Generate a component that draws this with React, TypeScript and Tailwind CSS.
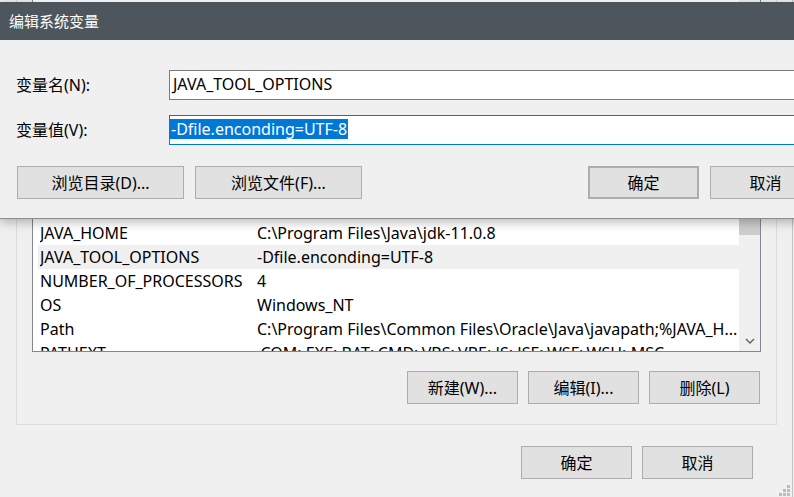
import React from "react";

const hiddenRows: [string, string][] = [
  ["CLASSPATH", ".;%JAVA_HOME%\\lib;%JAVA_HOME%\\lib\\tools.jar"],
  ["ComSpec", "C:\\Windows\\system32\\cmd.exe"],
  ["configsetroot", "C:\\Windows\\ConfigSetRoot"],
  ["DriverData", "C:\\Windows\\System32\\Drivers\\DriverData"],
  ["ERLANG_HOME", "C:\\Program Files\\erl-23.0"],
  ["GRADLE_HOME", "D:\\gradle-6.5"],
  ["GRADLE_USER_HOME", "D:\\gradle-repo"],
  ["INTEL_DEV_REDIST", "C:\\Program Files (x86)\\Common Files\\Intel\\Shared Libraries\\"],
  ["IntelliJ IDEA", "C:\\Program Files\\JetBrains\\IntelliJ IDEA 2020.2\\bin;"],
];

const rows: [string, string, boolean][] = [
  ["JAVA_HOME", "C:\\Program Files\\Java\\jdk-11.0.8", false],
  ["JAVA_TOOL_OPTIONS", "-Dfile.enconding=UTF-8", true],
  ["NUMBER_OF_PROCESSORS", "4", false],
  ["OS", "Windows_NT", false],
  ["Path", "C:\\Program Files\\Common Files\\Oracle\\Java\\javapath;%JAVA_H...", false],
  ["PATHEXT", ".COM;.EXE;.BAT;.CMD;.VBS;.VBE;.JS;.JSE;.WSF;.WSH;.MSC", false],
];

function Row({ name, value, sel }: { name: string; value: string; sel?: boolean }) {
  return (
    <div className={`flex h-[24px] items-center whitespace-nowrap pl-[2px] leading-[20px] ${sel ? "bg-[#f0f0f0]" : ""}`}>
      <div className="w-[217px] shrink-0 overflow-hidden">{name}</div>
      <div className="flex-1 overflow-hidden">{value}</div>
    </div>
  );
}

function Btn({ children, className = "" }: { children: React.ReactNode; className?: string }) {
  return (
    <div className={`flex h-[33px] shrink-0 items-center justify-center border border-[#adadad] bg-[#e1e1e1] leading-[20px] ${className}`}>
      {children}
    </div>
  );
}

export default function App() {
  return (
    <div className="relative h-[497px] w-[794px] overflow-hidden bg-[#f0f0f0] font-['Noto_Sans','Noto_Sans_CJK_SC',sans-serif] text-[16px] text-black">
      {/* underlying window: 系统变量 */}
      <div className="flex h-full w-[793px] flex-col border-r border-[#c4c4c4]">
        <div className="ml-[16px] flex w-[761px] flex-col border-x border-b border-[#dcdcdc] px-[15px] pb-[20px]">
          <div className="flex h-[352px] border-x border-b border-[#828790] bg-white">
            <div className="flex-1 overflow-hidden pl-[5px] pt-[5px]">
              {hiddenRows.map(([n, v]) => (
                <Row key={n} name={n} value={v} />
              ))}
              {rows.map(([n, v, s]) => (
                <Row key={n} name={n} value={v} sel={s} />
              ))}
            </div>
            <div className="flex w-[21px] flex-col bg-[#f0f0f0]">
              <div className="h-[21px]" />
              <div className="h-[214px] bg-[#cdcdcd]" />
              <div className="flex-1" />
              <div className="flex h-[21px] items-center justify-center">
                <svg width="10" height="6" viewBox="0 0 10 6">
                  <path d="M1 1 L5 5 L9 1" fill="none" stroke="#606060" strokeWidth="1.4" />
                </svg>
              </div>
            </div>
          </div>
          <div className="mt-[19px] flex justify-end gap-[10px] pr-[1px]">
            <Btn className="w-[111px]">新建(W)...</Btn>
            <Btn className="w-[111px]">编辑(I)...</Btn>
            <Btn className="w-[111px]">删除(L)</Btn>
          </div>
        </div>
        <div className="mt-[21px] flex justify-end gap-[10px] pr-[39px]">
          <Btn className="w-[111px]">确定</Btn>
          <Btn className="w-[111px]">取消</Btn>
        </div>
      </div>

      {/* size grip */}
      <svg className="absolute left-[778px] top-[484px]" width="13" height="13" viewBox="0 0 13 13">
        <g fill="#bcbcbc">
          <rect x="9" y="1" width="3" height="3" />
          <rect x="5" y="5" width="3" height="3" />
          <rect x="9" y="5" width="3" height="3" />
          <rect x="1" y="9" width="3" height="3" />
          <rect x="5" y="9" width="3" height="3" />
          <rect x="9" y="9" width="3" height="3" />
        </g>
      </svg>

      {/* dialog: 编辑系统变量 */}
      <div className="absolute left-0 top-[2px] w-[840px] border-b border-[#8c8c8c] bg-[#f0f0f0] shadow-[0_3px_10px_rgba(0,0,0,0.28)]">
        <div className="flex h-[38px] items-center bg-[#4e565d] pl-[9px] text-[15px] text-white">编辑系统变量</div>
        <div className="flex flex-col pb-[19px] pt-[30px]">
          <div className="flex items-center pl-[16px]">
            <div className="w-[153px] shrink-0">变量名(N):</div>
            <div className="h-[30px] w-[700px] border border-[#7a7a7a] bg-white pl-[3px] pt-[3px] leading-[20px]">JAVA_TOOL_OPTIONS</div>
          </div>
          <div className="mt-[15px] flex items-center pl-[16px]">
            <div className="w-[153px] shrink-0">变量值(V):</div>
            <div className="h-[30px] w-[700px] border border-[#0078d7] bg-white pt-[1px]">
              <span className="inline-block bg-[#0078d7] pl-[1px] pr-[1px] leading-[20px] text-white">-Dfile.enconding=UTF-8</span>
            </div>
          </div>
          <div className="mt-[21px] flex pl-[17px]">
            <Btn className="w-[167px]">浏览目录(D)...</Btn>
            <Btn className="ml-[11px] w-[167px]">浏览文件(F)...</Btn>
            <Btn className="ml-[226px] w-[111px] border-2 border-[#0078d7]">确定</Btn>
            <Btn className="ml-[11px] w-[111px]">取消</Btn>
          </div>
        </div>
      </div>
    </div>
  );
}
